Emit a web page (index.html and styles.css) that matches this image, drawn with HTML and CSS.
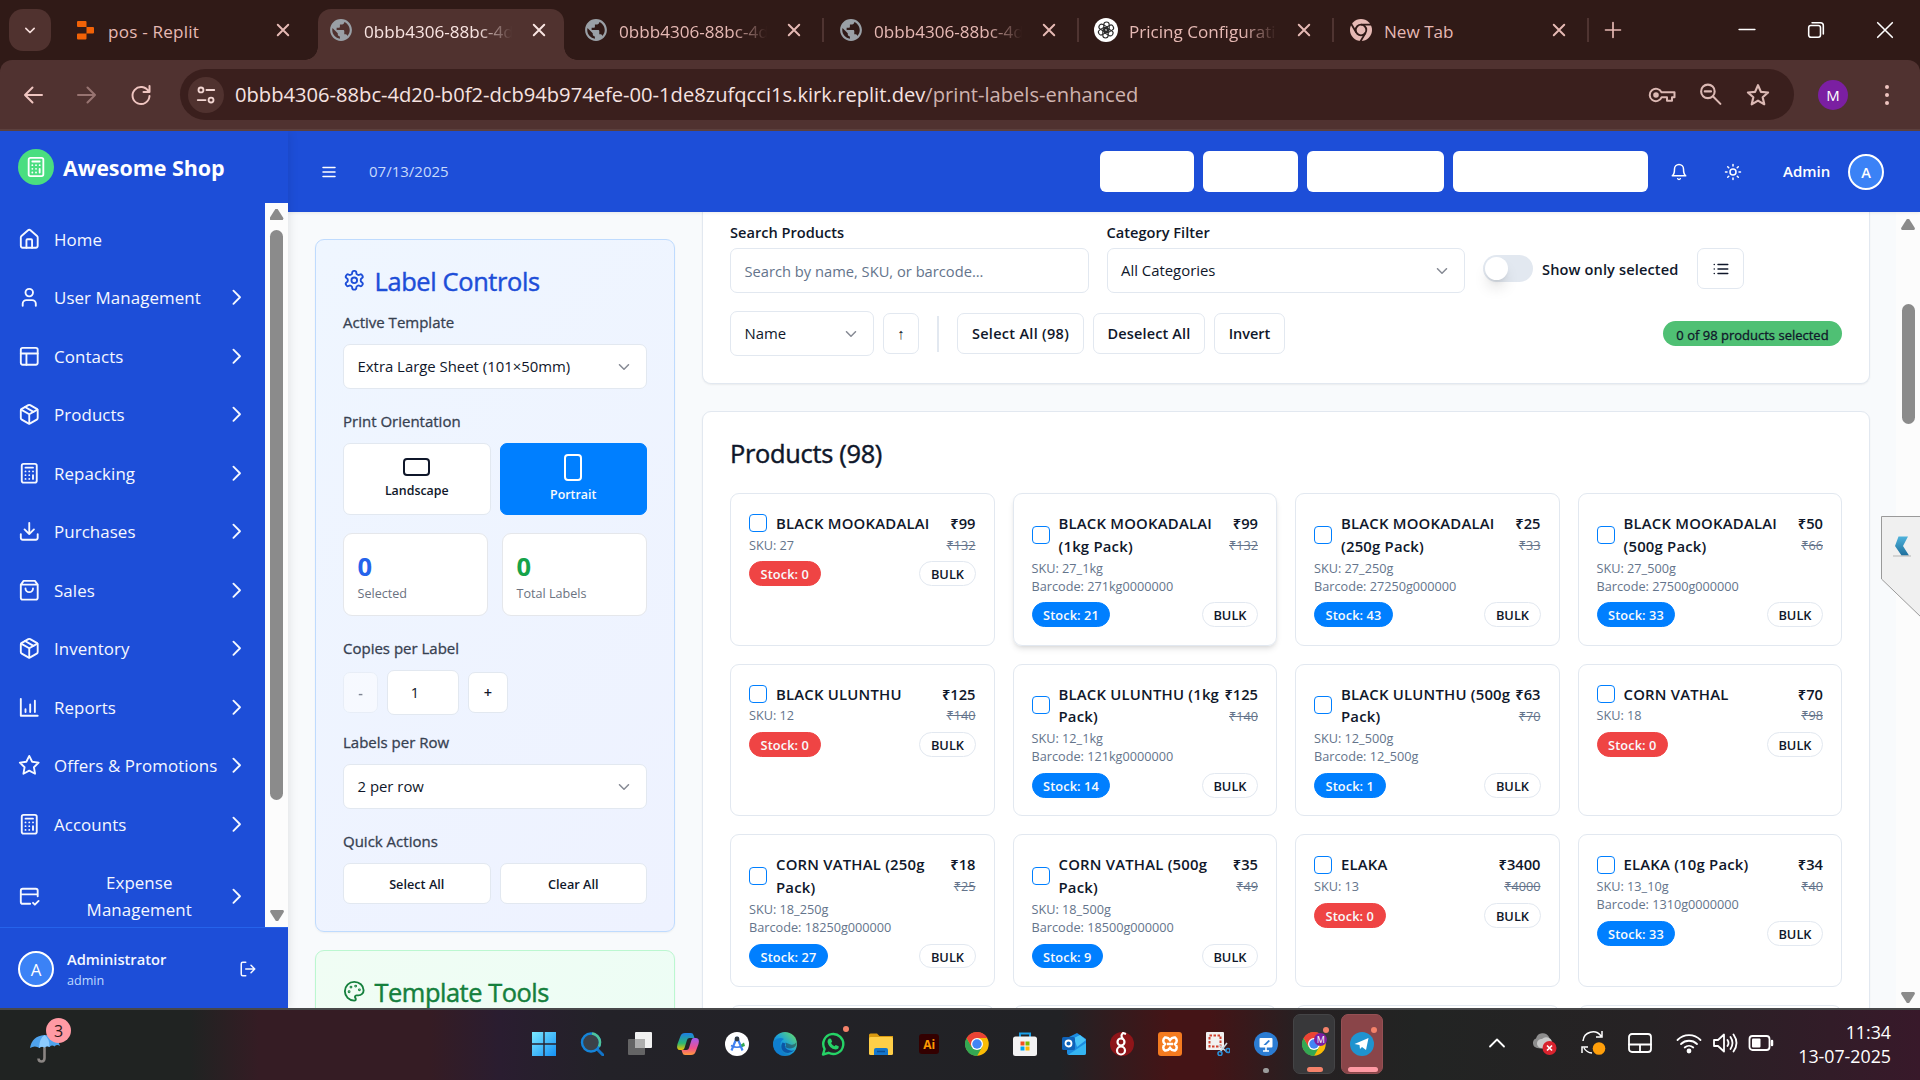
FILE: index.html
```html
<!DOCTYPE html>
<html lang="en">
<head>
<meta charset="utf-8">
<title>Print Labels</title>
<link rel="stylesheet" href="styles.css">
</head>
<body>
<svg class="defs" width="0" height="0">
  <defs>
    <linearGradient id="g-win" x1="0" y1="0" x2="1" y2="1"><stop offset="0" stop-color="#7be9ff"/><stop offset="1" stop-color="#1590f5"/></linearGradient>
    <linearGradient id="g-tv" x1="0" y1="0" x2="0" y2="1"><stop offset="0" stop-color="#4fb3dc"/><stop offset="1" stop-color="#1f6f9c"/></linearGradient>
    <linearGradient id="g-edge" x1="0" y1="1" x2="1" y2="0"><stop offset="0" stop-color="#0c59a4"/><stop offset=".5" stop-color="#1ba0dc"/><stop offset="1" stop-color="#6fe35a"/></linearGradient>
    <linearGradient id="g-cpa" x1="0" y1="0" x2="0" y2="1"><stop offset="0" stop-color="#1c7fe8"/><stop offset=".6" stop-color="#2bb673"/><stop offset="1" stop-color="#f2c300"/></linearGradient>
    <linearGradient id="g-cpb" x1="0" y1="0" x2="0" y2="1"><stop offset="0" stop-color="#a05cf0"/><stop offset=".6" stop-color="#f0508c"/><stop offset="1" stop-color="#ff9a3c"/></linearGradient>
    <symbol id="close" viewBox="0 0 24 24"><path d="M5 5l14 14M19 5L5 19"/></symbol>
    <symbol id="globe" viewBox="1 1 22 22"><path fill="#9aa0a6" d="M12 2C6.480 2 2 6.480 2 12s4.480 10 10 10 10-4.480 10-10S17.520 2 12 2zm-1 17.930c-3.950-.49-7-3.850-7-7.930 0-.62.08-1.210.21-1.790L9 15v1c0 1.100.9 2 2 2v1.930zm6.900-2.540c-.26-.81-1-1.390-1.900-1.390h-1v-3c0-.55-.45-1-1-1H8v-2h2c.55 0 1-.45 1-1V7h2c1.100 0 2-.9 2-2v-.41c2.930 1.190 5 4.060 5 7.410 0 2.080-.8 3.970-2.100 5.390z"/></symbol>
    <symbol id="chev" viewBox="0 0 24 24"><path d="M9 5l7 7-7 7"/></symbol>
    <symbol id="down" viewBox="0 0 24 24"><path d="M6 9l6 6 6-6"/></symbol>
    <symbol id="home" viewBox="0 0 24 24"><path d="M15 21v-8a1 1 0 0 0-1-1h-4a1 1 0 0 0-1 1v8"/><path d="M3 10a2 2 0 0 1 .709-1.528l7-5.999a2 2 0 0 1 2.582 0l7 5.999A2 2 0 0 1 21 10v9a2 2 0 0 1-2 2H5a2 2 0 0 1-2-2z"/></symbol>
    <symbol id="user" viewBox="0 0 24 24"><path d="M19 21v-2a4 4 0 0 0-4-4H9a4 4 0 0 0-4 4v2"/><circle cx="12" cy="7" r="4"/></symbol>
    <symbol id="layout" viewBox="0 0 24 24"><rect x="3" y="3" width="18" height="18" rx="2"/><path d="M3 9h18M9 21V9"/></symbol>
    <symbol id="package" viewBox="0 0 24 24"><path d="M7.500 4.270l9 5.150"/><path d="M21 8a2 2 0 0 0-1-1.730l-7-4a2 2 0 0 0-2 0l-7 4A2 2 0 0 0 3 8v8a2 2 0 0 0 1 1.730l7 4a2 2 0 0 0 2 0l7-4A2 2 0 0 0 21 16z"/><path d="M3.300 7l8.700 5 8.700-5M12 22V12"/></symbol>
    <symbol id="calc" viewBox="0 0 24 24"><rect x="4" y="2" width="16" height="20" rx="2"/><path d="M8 6h8M16 14v4M16 10h.01M12 10h.01M8 10h.01M12 14h.01M8 14h.01M12 18h.01M8 18h.01"/></symbol>
    <symbol id="download" viewBox="0 0 24 24"><path d="M21 15v4a2 2 0 0 1-2 2H5a2 2 0 0 1-2-2v-4M7 10l5 5 5-5M12 15V3"/></symbol>
    <symbol id="bag" viewBox="0 0 24 24"><path d="M6 2L3 6v14a2 2 0 0 0 2 2h14a2 2 0 0 0 2-2V6l-3-4zM3 6h18M16 10a4 4 0 0 1-8 0"/></symbol>
    <symbol id="chart" viewBox="0 0 24 24"><path d="M3 3v18h18M8 17v-3M13 17V9M18 17V5"/></symbol>
    <symbol id="star" viewBox="0 0 24 24"><path d="M12 2l3.090 6.260L22 9.270l-5 4.870 1.180 6.880L12 17.770l-6.180 3.250L7 14.140 2 9.270l6.910-1.010z"/></symbol>
    <symbol id="cardcheck" viewBox="0 0 24 24"><path d="M13 20H5a2 2 0 0 1-2-2V6a2 2 0 0 1 2-2h14a2 2 0 0 1 2 2v6M3 10h18M16 19l2 2 4-4"/></symbol>
    <symbol id="gear" viewBox="0 0 24 24"><path d="M12.220 2h-.44a2 2 0 0 0-2 2v.18a2 2 0 0 1-1 1.730l-.43.25a2 2 0 0 1-2 0l-.15-.08a2 2 0 0 0-2.730.73l-.22.38a2 2 0 0 0 .73 2.730l.15.1a2 2 0 0 1 1 1.720v.51a2 2 0 0 1-1 1.740l-.15.09a2 2 0 0 0-.73 2.730l.22.38a2 2 0 0 0 2.730.73l.15-.08a2 2 0 0 1 2 0l.43.25a2 2 0 0 1 1 1.730V20a2 2 0 0 0 2 2h.44a2 2 0 0 0 2-2v-.18a2 2 0 0 1 1-1.730l.43-.25a2 2 0 0 1 2 0l.15.08a2 2 0 0 0 2.730-.73l.22-.39a2 2 0 0 0-.73-2.730l-.15-.08a2 2 0 0 1-1-1.740v-.5a2 2 0 0 1 1-1.740l.15-.09a2 2 0 0 0 .73-2.730l-.22-.38a2 2 0 0 0-2.730-.73l-.15.08a2 2 0 0 1-2 0l-.43-.25a2 2 0 0 1-1-1.730V4a2 2 0 0 0-2-2z"/><circle cx="12" cy="12" r="3"/></symbol>
    <symbol id="palette" viewBox="0 0 24 24"><circle cx="13.500" cy="6.500" r=".5"/><circle cx="17.500" cy="10.500" r=".5"/><circle cx="8.500" cy="7.500" r=".5"/><circle cx="6.500" cy="12.500" r=".5"/><path d="M12 2C6.500 2 2 6.500 2 12s4.500 10 10 10c.926 0 1.648-.746 1.648-1.688 0-.437-.18-.835-.437-1.125-.29-.289-.438-.652-.438-1.125a1.640 1.640 0 0 1 1.668-1.668h1.996c3.051 0 5.555-2.503 5.555-5.554C21.965 6.012 17.461 2 12 2z"/></symbol>
    <symbol id="chrome" viewBox="0 0 48 48"><circle cx="24" cy="24" r="23.500" fill="#fbbc05"/><path d="M13.600 30L3.200 12A24 24 0 0 0 24 48l10.400-18z" fill="#34a853"/><path d="M24 12h20.800A24 24 0 0 0 3.200 12l10.400 18z" fill="#ea4335"/><circle cx="24" cy="24" r="12" fill="#fff"/><circle cx="24" cy="24" r="9.500" fill="#4285f4"/></symbol>
  </defs>
</svg>

<div class="screen">
  <header class="tabstrip">
    <div class="tabsearch"><svg class="ln" viewBox="0 0 24 24" width="20" height="20" stroke-width="2.500"><path d="M7 10l5 5 5-5"/></svg></div>
    <div class="tab first">
      <svg class="fav" viewBox="0 0 24 24"><path fill="#f26207" d="M4 3h7.500q1 0 1 1v5H4q-1 0-1-1V4q0-1 1-1zM12.500 9H19q1 0 1 1v4.500q0 1-1 1h-6.500zM4 15.500h8.500v5q0 1-1 1H4q-1 0-1-1v-4q0-1 1-1z"/></svg>
      <span class="tt nofade">pos - Replit</span><svg class="x ln"><use href="#close"/></svg>
    </div>
    <div class="tab on"><svg class="fav"><use href="#globe"/></svg><span class="tt">0bbb4306-88bc-4d</span><svg class="x ln"><use href="#close"/></svg></div>
    <div class="tab"><svg class="fav"><use href="#globe"/></svg><span class="tt">0bbb4306-88bc-4d</span><svg class="x ln"><use href="#close"/></svg></div>
    <div class="tab sep"><svg class="fav"><use href="#globe"/></svg><span class="tt">0bbb4306-88bc-4d</span><svg class="x ln"><use href="#close"/></svg></div>
    <div class="tab sep">
      <svg class="fav" viewBox="0 0 24 24"><circle cx="12" cy="12" r="12" fill="#fff"/><g fill="none" stroke="#2b2b2b" stroke-width="1.100"><rect id="pt" x="9.800" y="4" width="5.400" height="9.500" rx="2.700"/><use href="#pt" transform="rotate(60 12 12)"/><use href="#pt" transform="rotate(120 12 12)"/><use href="#pt" transform="rotate(180 12 12)"/><use href="#pt" transform="rotate(240 12 12)"/><use href="#pt" transform="rotate(300 12 12)"/></g></svg>
      <span class="tt">Pricing Configurati</span><svg class="x ln"><use href="#close"/></svg>
    </div>
    <div class="tab sep">
      <svg class="fav" viewBox="0 0 24 24"><circle cx="12" cy="12" r="11" fill="#e6b9b4"/><circle cx="12" cy="12" r="5.300" fill="none" stroke="#301a17" stroke-width="1.800"/><path d="M12 6.700h11M7.400 14.700L2 5.500M16.600 14.700l-5.300 9" stroke="#301a17" stroke-width="1.800"/></svg>
      <span class="tt nofade">New Tab</span><svg class="x ln"><use href="#close"/></svg>
    </div>
    <div class="newtab"><svg class="ln" viewBox="0 0 24 24" width="20" height="20" stroke-width="2.200"><path d="M12 3v18M3 12h18"/></svg></div>
    <div class="wins">
      <svg class="ln" viewBox="0 0 16 16" width="18" height="18"><path d="M1 7.500h14"/></svg>
      <svg class="ln" viewBox="0 0 16 16" width="18" height="18"><rect x="1.500" y="4" width="10.500" height="10.500" rx="2"/><path d="M4.500 1.500h7.500q2.500 0 2.500 2.500v7.500"/></svg>
      <svg class="ln" viewBox="0 0 16 16" width="18" height="18"><path d="M1.500 1.500l13 13M14.500 1.500l-13 13"/></svg>
    </div>
  </header>

  <div class="toolbar">
    <svg class="ln nb" viewBox="0 0 24 24"><path d="M21 12H4M11.500 4.500L4 12l7.500 7.500"/></svg>
    <svg class="ln nb dim" viewBox="0 0 24 24"><path d="M3 12h17M12.500 4.500L20 12l-7.500 7.500"/></svg>
    <svg class="ln nb" viewBox="0 0 24 24"><path d="M19.500 8.500A8.500 8.500 0 1 0 20.500 13M20.500 3v6h-6"/></svg>
    <div class="omni">
      <div class="site"><svg class="ln" viewBox="0 0 24 24" width="22" height="22" stroke-width="2.200"><circle cx="6.500" cy="6.500" r="2.700"/><path d="M12.500 6.500H21M3 17.500h8.500"/><circle cx="17.500" cy="17.500" r="2.700"/></svg></div>
      <div class="url">0bbb4306-88bc-4d20-b0f2-dcb94b974efe-00-1de8zufqcci1s.kirk.replit.dev<span>/print-labels-enhanced</span></div>
      <svg class="ln oi" viewBox="0 0 28 24" width="28" height="24"><path d="M13.500 9.200h13v5h-2.500v3.600h-5v-3.600h-5.300a6.200 6.200 0 1 1-.2-5z"/><circle cx="8" cy="12" r="1.800" fill="currentColor"/></svg>
      <svg class="ln oi" viewBox="0 0 24 24" width="25" height="25"><circle cx="9.500" cy="9" r="6.500"/><path d="M14.500 14l7 7M6.500 9h6"/></svg>
      <svg class="ln oi" viewBox="0 0 24 24" width="26" height="26"><path d="M12 3l2.700 6.100 6.600.6-5 4.400 1.500 6.500L12 17.200l-5.800 3.400 1.500-6.500-5-4.400 6.600-.6z"/></svg>
    </div>
    <div class="pm">M</div>
    <svg class="kebab" viewBox="0 0 24 24" width="24" height="24"><circle cx="12" cy="4" r="2"/><circle cx="12" cy="12" r="2"/><circle cx="12" cy="20" r="2"/></svg>
  </div>

  <div class="app">
    <aside class="side">
      <div class="brand"><div class="logo"><svg class="ln" viewBox="0 0 24 24" width="22" height="22"><use href="#calc"/></svg></div><span>Awesome Shop</span></div>
      <div class="navwrap">
        <nav class="nav">
          <a><svg class="ln ic"><use href="#home"/></svg><span>Home</span></a>
          <a><svg class="ln ic"><use href="#user"/></svg><span>User Management</span><svg class="ln ic"><use href="#chev"/></svg></a>
          <a><svg class="ln ic"><use href="#layout"/></svg><span>Contacts</span><svg class="ln ic"><use href="#chev"/></svg></a>
          <a><svg class="ln ic"><use href="#package"/></svg><span>Products</span><svg class="ln ic"><use href="#chev"/></svg></a>
          <a><svg class="ln ic"><use href="#calc"/></svg><span>Repacking</span><svg class="ln ic"><use href="#chev"/></svg></a>
          <a><svg class="ln ic"><use href="#download"/></svg><span>Purchases</span><svg class="ln ic"><use href="#chev"/></svg></a>
          <a><svg class="ln ic"><use href="#bag"/></svg><span>Sales</span><svg class="ln ic"><use href="#chev"/></svg></a>
          <a><svg class="ln ic"><use href="#package"/></svg><span>Inventory</span><svg class="ln ic"><use href="#chev"/></svg></a>
          <a><svg class="ln ic"><use href="#chart"/></svg><span>Reports</span><svg class="ln ic"><use href="#chev"/></svg></a>
          <a><svg class="ln ic"><use href="#star"/></svg><span>Offers &amp; Promotions</span><svg class="ln ic"><use href="#chev"/></svg></a>
          <a><svg class="ln ic"><use href="#calc"/></svg><span>Accounts</span><svg class="ln ic"><use href="#chev"/></svg></a>
          <a class="two"><svg class="ln ic"><use href="#cardcheck"/></svg><span>Expense<br>Management</span><svg class="ln ic"><use href="#chev"/></svg></a>
        </nav>
        <div class="sbar nb-bar"><i class="up"></i><b></b><i class="dn"></i></div>
      </div>
      <div class="me">
        <div class="av">A</div>
        <div class="who"><strong>Administrator</strong><small>admin</small></div>
        <svg class="ln" viewBox="0 0 24 24" width="18" height="18"><path d="M9 21H5a2 2 0 0 1-2-2V5a2 2 0 0 1 2-2h4M16 17l5-5-5-5M21 12H9"/></svg>
      </div>
    </aside>

    <div class="right">
      <div class="top">
        <svg class="ln" viewBox="0 0 24 24" width="18" height="18"><path d="M4 6h16M4 12h16M4 18h16"/></svg>
        <span class="date">07/13/2025</span>
        <div class="blank w1"></div><div class="blank w2"></div><div class="blank w3"></div><div class="blank w4"></div>
        <svg class="ln bell" viewBox="0 0 24 24" width="18" height="18"><path d="M6 8a6 6 0 0 1 12 0c0 7 3 9 3 9H3s3-2 3-9M10.300 21a1.940 1.940 0 0 0 3.400 0"/></svg>
        <svg class="ln sun" viewBox="0 0 24 24" width="18" height="18"><circle cx="12" cy="12" r="4"/><path d="M12 2v2M12 20v2M4.930 4.930l1.410 1.410M17.660 17.660l1.410 1.410M2 12h2M20 12h2M6.340 17.660l-1.410 1.410M19.070 4.930l-1.410 1.410"/></svg>
        <span class="adm">Admin</span>
        <div class="av b">A</div>
      </div>

      <div class="main">
        <div class="left">
          <section class="panel blue">
            <h2><svg class="ln ic"><use href="#gear"/></svg><span>Label Controls</span></h2>
            <label>Active Template</label>
            <div class="select"><span>Extra Large Sheet (101×50mm)</span><svg class="ln"><use href="#down"/></svg></div>
            <label>Print Orientation</label>
            <div class="pair orient">
              <div class="obtn"><i class="land"></i><span>Landscape</span></div>
              <div class="obtn sel"><i class="port"></i><span>Portrait</span></div>
            </div>
            <div class="pair stats">
              <div class="stat"><b>0</b><span>Selected</span></div>
              <div class="stat g"><b>0</b><span>Total Labels</span></div>
            </div>
            <label class="cp">Copies per Label</label>
            <div class="copies"><div class="btn mi">-</div><div class="btn num">1</div><div class="btn pl">+</div></div>
            <label class="lr">Labels per Row</label>
            <div class="select"><span>2 per row</span><svg class="ln"><use href="#down"/></svg></div>
            <label>Quick Actions</label>
            <div class="pair"><div class="btn qa">Select All</div><div class="btn qa">Clear All</div></div>
          </section>
          <section class="panel green"><h2><svg class="ln ic"><use href="#palette"/></svg><span>Template Tools</span></h2></section>
        </div>

        <div class="content">
          <section class="card filters">
            <div class="frow">
              <div class="field"><label>Search Products</label><div class="select ph"><span>Search by name, SKU, or barcode...</span></div></div>
              <div class="field"><label>Category Filter</label><div class="select"><span>All Categories</span><svg class="ln"><use href="#down"/></svg></div></div>
              <div class="tog"><div class="switch"><i></i></div><span>Show only selected</span></div>
              <div class="btn list"><svg class="ln" viewBox="0 0 24 24" width="18" height="18"><path d="M8 6h13M8 12h13M8 18h13M3 6h.01M3 12h.01M3 18h.01"/></svg></div>
            </div>
            <div class="srow">
              <div class="select name"><span>Name</span><svg class="ln"><use href="#down"/></svg></div>
              <div class="btn arr">↑</div>
              <div class="vsep"></div>
              <div class="btn sa">Select All (98)</div>
              <div class="btn da">Deselect All</div>
              <div class="btn inv">Invert</div>
              <div class="badge">0 of 98 products selected</div>
            </div>
          </section>
          <section class="card prods">
            <h2>Products (98)</h2>
            <div class="grid">
              <article class="p"><div class="h"><div class="n"><i></i><span>BLACK MOOKADALAI</span></div><b>₹99</b></div><div class="s"><span>SKU: 27</span><del>₹132</del></div><div class="f"><em class="red">Stock: 0</em><u>BULK</u></div></article>
              <article class="p hov"><div class="h"><div class="n"><i></i><span>BLACK MOOKADALAI<br>(1kg Pack)</span></div><b>₹99</b></div><del class="m">₹132</del><div class="s"><span>SKU: 27_1kg</span></div><div class="s"><span>Barcode: 271kg0000000</span></div><div class="f"><em>Stock: 21</em><u>BULK</u></div></article>
              <article class="p"><div class="h"><div class="n"><i></i><span>BLACK MOOKADALAI<br>(250g Pack)</span></div><b>₹25</b></div><del class="m">₹33</del><div class="s"><span>SKU: 27_250g</span></div><div class="s"><span>Barcode: 27250g000000</span></div><div class="f"><em>Stock: 43</em><u>BULK</u></div></article>
              <article class="p"><div class="h"><div class="n"><i></i><span>BLACK MOOKADALAI<br>(500g Pack)</span></div><b>₹50</b></div><del class="m">₹66</del><div class="s"><span>SKU: 27_500g</span></div><div class="s"><span>Barcode: 27500g000000</span></div><div class="f"><em>Stock: 33</em><u>BULK</u></div></article>

              <article class="p"><div class="h"><div class="n"><i></i><span>BLACK ULUNTHU</span></div><b>₹125</b></div><div class="s"><span>SKU: 12</span><del>₹140</del></div><div class="f"><em class="red">Stock: 0</em><u>BULK</u></div></article>
              <article class="p"><div class="h"><div class="n"><i></i><span>BLACK ULUNTHU (1kg<br>Pack)</span></div><b>₹125</b></div><del class="m">₹140</del><div class="s"><span>SKU: 12_1kg</span></div><div class="s"><span>Barcode: 121kg0000000</span></div><div class="f"><em>Stock: 14</em><u>BULK</u></div></article>
              <article class="p"><div class="h"><div class="n"><i></i><span>BLACK ULUNTHU (500g<br>Pack)</span></div><b>₹63</b></div><del class="m">₹70</del><div class="s"><span>SKU: 12_500g</span></div><div class="s"><span>Barcode: 12_500g</span></div><div class="f"><em>Stock: 1</em><u>BULK</u></div></article>
              <article class="p"><div class="h"><div class="n"><i></i><span>CORN VATHAL</span></div><b>₹70</b></div><div class="s"><span>SKU: 18</span><del>₹98</del></div><div class="f"><em class="red">Stock: 0</em><u>BULK</u></div></article>

              <article class="p"><div class="h"><div class="n"><i></i><span>CORN VATHAL (250g<br>Pack)</span></div><b>₹18</b></div><del class="m">₹25</del><div class="s"><span>SKU: 18_250g</span></div><div class="s"><span>Barcode: 18250g000000</span></div><div class="f"><em>Stock: 27</em><u>BULK</u></div></article>
              <article class="p"><div class="h"><div class="n"><i></i><span>CORN VATHAL (500g<br>Pack)</span></div><b>₹35</b></div><del class="m">₹49</del><div class="s"><span>SKU: 18_500g</span></div><div class="s"><span>Barcode: 18500g000000</span></div><div class="f"><em>Stock: 9</em><u>BULK</u></div></article>
              <article class="p"><div class="h"><div class="n"><i></i><span>ELAKA</span></div><b>₹3400</b></div><div class="s"><span>SKU: 13</span><del>₹4000</del></div><div class="f"><em class="red">Stock: 0</em><u>BULK</u></div></article>
              <article class="p"><div class="h"><div class="n"><i></i><span>ELAKA (10g Pack)</span></div><b>₹34</b></div><div class="s"><span>SKU: 13_10g</span><del>₹40</del></div><div class="s"><span>Barcode: 1310g0000000</span></div><div class="f"><em>Stock: 33</em><u>BULK</u></div></article>
              <article class="p"></article><article class="p"></article><article class="p"></article><article class="p"></article>
            </div>
          </section>
        </div>

        <div class="sbar main-bar"><i class="up"></i><b></b><i class="dn"></i></div>
      </div>
    </div>
  </div>

  <svg class="handle" width="40" height="102" viewBox="0 0 40 102"><path d="M.5.500H41V102L.5 63z" fill="#f0f0f0" stroke="#9a9a9a"/><path d="M17.500 20.500H27l-5 9.500 6 9.500h-7.500L14 30z" fill="url(#g-tv)"/><path d="M12 40h18" stroke="#b5b5b5"/></svg>

  <footer class="task">
    <div class="weather">
      <svg width="32" height="32" viewBox="0 0 32 32"><path d="M14.500 12v15q0 3.500-3 3.500t-3-3" fill="none" stroke="#8a8583" stroke-width="2.600"/><path d="M0 17Q2 5 14.500 4 27 4 30 15q-3-2-5.500.500-2.500-2-5 .5-2.500-1.500-5 .5-2.500-1.500-5 .5Q5 14 0 17z" fill="#4fa3ee"/><path d="M9 17Q9.500 7 14.500 4q5 3 5 12-2.500-1.500-5 .500-3-1.500-5.500.5z" fill="#8ccbff"/></svg>
      <span>3</span>
    </div>
    <div class="apps">
      <div class="a"><svg viewBox="0 0 24 24"><path d="M0 0h11.300v11.300H0zM12.700 0H24v11.300H12.700zM0 12.700h11.300V24H0zM12.700 12.700H24V24H12.700z" fill="url(#g-win)"/></svg></div>
      <div class="a"><svg viewBox="0 0 24 24"><path d="M17 17l6 6" stroke="#1173c8" stroke-width="3" stroke-linecap="round"/><circle cx="11" cy="10.500" r="9" fill="#3b4148" stroke="#1584d8" stroke-width="2.400"/><path d="M12 1.500a9 9 0 0 1 7 13" fill="none" stroke="#4fc49a" stroke-width="2.400"/></svg></div>
      <div class="a"><svg viewBox="0 0 24 24"><rect x="7" y="0" width="17" height="16" rx="1" fill="#f1f1f1"/><rect x="0" y="7" width="17" height="16" rx="1" fill="#6b6b6b" opacity=".9"/><rect x="7" y="7" width="10" height="9" fill="#adadad"/></svg></div>
      <div class="a"><svg viewBox="0 0 24 24"><path d="M9 1h6q2 0 2.500 2l1 3h-5q-2 0-2.500 2L8.500 16q-.5 2-2.500 2H4Q0 18 1.500 12L4.500 4Q5.500 1 9 1z" fill="url(#g-cpa)"/><path d="M15 23H9q-2 0-2.500-2l-1-3h5q2 0 2.500-2L15.500 8q.5-2 2.500-2h2q4 0 2.500 6L19.500 20Q18.500 23 15 23z" fill="url(#g-cpb)"/></svg></div>
      <div class="a"><svg viewBox="0 0 24 24"><circle cx="12" cy="12" r="12" fill="#fff"/><path d="M12 5L6.500 18.500M12 5l5.500 13.500" stroke="#4285f4" stroke-width="2.200"/><path d="M6 13.500q6 3.500 12 0" stroke="#3f7de8" stroke-width="1.500" fill="none"/><circle cx="12" cy="7" r="2.400" fill="#2f3a44"/><path d="M16 12.500l3-2 1 3.500-3 1z" fill="#34a853"/></svg></div>
      <div class="a"><svg viewBox="0 0 24 24"><circle cx="12" cy="12" r="12" fill="url(#g-edge)"/><path d="M1 9q5-5 10-2-4 2-4 7 0 6 6 9.800Q2 24 .300 14z" fill="#0f7fd0"/><path d="M9.500 10.500Q7 15 10 19q5 4.500 12-1-4 1.500-7.500-.5-4-2.500-2-6z" fill="#0c56a5"/><path d="M12.500 10.500q1.200 2.500-.2 4.500 3 2.500 8.500.500 3-2 2.700-5.500-2 3.500-6 2.500-2.500-1-5-2z" fill="#23262b" opacity=".45"/></svg></div>
      <div class="a"><svg viewBox="0 0 24 24"><path d="M2 22.500l1.600-5.500a10 10 0 1 1 3.900 3.800z" fill="none" stroke="#25d366" stroke-width="2.400" stroke-linejoin="round"/><path d="M8 6.500l2 .2 1.200 3L10 11q1.300 2.300 3.500 3.300l1.200-1.400 3 1.300q.3 3.300-3.200 3.300Q8 16.500 6.500 10 6.500 7.500 8 6.500z" fill="#25d366"/></svg><i class="dot"></i></div>
      <div class="a"><svg viewBox="0 0 24 24"><path d="M0 3q0-1.500 1.500-1.500H8L10.500 4H24v6H0z" fill="#d99a10"/><rect x="0" y="5" width="24" height="18" rx="1.500" fill="#ffcf48"/><path d="M5 23v-5q0-2 2-2h10q2 0 2 2v5z" fill="#1476cc"/><path d="M8 19.500h8" stroke="#0b4f94" stroke-width="1.500"/></svg></div>
      <div class="a"><span class="ai">Ai</span></div>
      <div class="a"><svg><use href="#chrome"/></svg></div>
      <div class="a"><svg viewBox="0 0 24 24"><path d="M7 6V1.500h10V6" fill="none" stroke="#1a9fe8" stroke-width="2"/><rect x="0" y="4.500" width="24" height="19.500" rx="2.500" fill="#f3f3f3"/><path d="M7.500 9.500h4v4h-4z" fill="#f25022"/><path d="M12.500 9.500h4v4h-4z" fill="#7fba00"/><path d="M7.500 14.500h4v4h-4z" fill="#00a4ef"/><path d="M12.500 14.500h4v4h-4z" fill="#ffb900"/></svg></div>
      <div class="a"><svg viewBox="0 0 24 24"><path d="M5 6l10-5 9 6v14q0 2-2 2H7q-2 0-2-2z" fill="#1b8be0"/><path d="M12 6l6-3 6 5-9 7z" fill="#49c3f7"/><path d="M6 23l18-12v10q0 2-2 2z" fill="#35b5f2"/><rect x="0" y="5" width="13" height="13" rx="1.500" fill="#0f62b8"/><circle cx="6.500" cy="11.500" r="3" fill="none" stroke="#fff" stroke-width="1.800"/></svg></div>
      <div class="a"><svg viewBox="0 0 24 24"><circle cx="12" cy="12" r="12" fill="#8e1519"/><g fill="none" stroke="#fff" stroke-width="2.200"><circle cx="11" cy="10" r="3.500"/><circle cx="11" cy="18.500" r="4"/><path d="M13 7q-3-3.500 0-6l3 1"/></g></svg></div>
      <div class="a"><svg viewBox="0 0 24 24"><rect width="24" height="24" rx="3" fill="#f47b20"/><path d="M7 5.500q-3.500 3 0 6.500-3.500 3.500 0 6.500 3 .5 5-2.500 2 3 5 2.500 3.500-3 0-6.500 3.500-3.500 0-6.500-3-.5-5 2.500-2-3-5-2.500zM9 12h6" fill="none" stroke="#fff" stroke-width="2.500"/></svg></div>
      <div class="a"><svg viewBox="0 0 24 24"><rect x="0" y="0" width="18" height="18" rx="1" fill="#f1f1f1"/><path d="M3.500 3.500h11v11h-11z" fill="none" stroke="#d13f2d" stroke-width="2" stroke-dasharray="2.500 1.500"/><path d="M13 13l8 7M21 11l-7 9" stroke="#c9d6df" stroke-width="1.600"/><circle cx="22" cy="18.500" r="2" fill="none" stroke="#2a8fd8" stroke-width="1.600"/><circle cx="14" cy="21.500" r="2" fill="none" stroke="#2a8fd8" stroke-width="1.600"/></svg></div>
      <div class="a"><svg viewBox="0 0 24 24"><circle cx="12" cy="12" r="12" fill="#2b7cd3"/><rect x="5.500" y="6" width="13" height="9.500" rx="1" fill="#fff"/><path d="M9 19h6M12 15v4" stroke="#fff" stroke-width="1.600"/><path d="M14.500 8l-5 5h2.500l4-4z" fill="#2b7cd3"/></svg><i class="run"></i></div>
      <div class="a act"><svg><use href="#chrome"/></svg><em>M</em><i class="dot"></i><i class="line"></i></div>
      <div class="a act pink"><svg viewBox="0 0 24 24"><circle cx="12" cy="12" r="12" fill="#1f93cf"/><path d="M4.500 12L18.500 6l-2.500 12-4-3-2 2-.5-4z" fill="#fff"/></svg><i class="dot"></i><i class="line w"></i></div>
    </div>
    <div class="tray">
      <svg class="ln" width="18" height="18" viewBox="0 0 18 18"><path d="M2 12.500l7-7 7 7"/></svg>
      <svg class="cl" width="26" height="26" viewBox="0 0 26 26"><path d="M6 18a5 5 0 0 1-1-9.500A7 7 0 0 1 18 7l3 8-8 4z" fill="#8d8d8d"/><path d="M10 18a4.500 4.500 0 0 1 1-9 6 6 0 0 1 10 3l-2 6z" fill="#c9c9c9"/><circle cx="18.500" cy="18" r="7" fill="#d9232e"/><path d="M16 15.500l5 5M21 15.500l-5 5" stroke="#fff" stroke-width="1.700"/></svg>
      <svg class="sy" width="26" height="26" viewBox="0 0 26 26"><path d="M3 11A10 10 0 0 1 21 6M22 1v6h-6M12 23A10 10 0 0 1 4 18M2 23v-6h6" fill="none" stroke="#fff" stroke-width="1.500"/><circle cx="19" cy="18.500" r="6.300" fill="#ff9f0a"/></svg>
      <svg class="ln tp" width="24" height="20" viewBox="0 0 24 20"><rect x="1" y="1" width="22" height="18" rx="3"/><path d="M1 11.500h22M12 11.500V19"/></svg>
      <svg class="ln wf" width="26" height="22" viewBox="0 0 26 22"><path d="M1.500 8a16 16 0 0 1 23 0M5 12a11.500 11.500 0 0 1 16 0M8.700 15.500a6.500 6.500 0 0 1 8.600 0"/><circle cx="13" cy="19" r="1.500" fill="currentColor"/></svg>
      <svg class="ln vo" width="26" height="22" viewBox="0 0 26 22"><path d="M2 8h4l6-5.500v17L6 14H2zM15.500 8q2 3 0 6M18.500 5q4 6 0 12M21.500 2.500q6 8.500 0 17"/></svg>
      <svg class="ln ba" width="26" height="20" viewBox="0 0 26 20"><rect x="1.500" y="3" width="20" height="14" rx="3"/><rect x="4" y="5.500" width="8.500" height="9" rx="1" fill="currentColor" stroke="none"/><path d="M24 8v4" stroke-width="2.500"/></svg>
      <div class="clock"><span>11:34</span><span>13-07-2025</span></div>
    </div>
  </footer>
</div>
</body>
</html>
```
FILE: styles.css
```css
* { box-sizing: border-box; }
body { margin: 0; font-family: "Open Sans", "Noto Sans", sans-serif; color: #0f172a; font-size: 14.6px; }
.defs { display: block; position: absolute; }
.screen { width: 1920px; height: 1080px; overflow: hidden; display: flex; flex-direction: column; position: relative; background: #301a17; }
.ln { fill: none; stroke: currentColor; stroke-width: 2; stroke-linecap: round; stroke-linejoin: round; flex: none; }
.ic { width: 22.5px; height: 22.5px; }
h2 { margin: 0; font-weight: 400; -webkit-text-stroke: .45px currentColor; }

/* browser chrome */
.tabstrip { height: 60px; background: #301a17; display: flex; align-items: flex-start; padding-left: 9px; color: #e6b9b4; flex: none; }
.tabsearch { width: 42px; height: 42px; margin-top: 9px; border-radius: 14px; background: #50322f; display: grid; place-items: center; color: #f6dedb; }
.tab { width: 255px; height: 60px; display: flex; align-items: center; padding-left: 9px; position: relative; flex: none; }
.tab .fav { width: 24px; height: 24px; margin-right: 11px; flex: none; }
.tab .tt { width: 151px; overflow: hidden; white-space: nowrap; font-size: 17.1px; padding-top: 2px; -webkit-mask-image: linear-gradient(90deg, #000 75%, transparent 98%); mask-image: linear-gradient(90deg, #000 75%, transparent 98%); }
.tab .tt.nofade { -webkit-mask-image: none; mask-image: none; }
.tab .x { width: 18px; height: 18px; stroke-width: 2.6; margin-left: 15px; }
.tab.first { margin-left: 15px; padding-left: 8px; width: 258px; }
.tab.first .fav { margin-right: 10px; }
.tab.first .tt { letter-spacing: .2px; }
.tab.first .x { margin-left: 15px; }
.tab.on { color: #f9e5e2; margin-left: -8px; padding-left: 13px; width: 259px; }
.tab.on::before { content: ""; position: absolute; left: 2px; width: 246px; top: 9px; bottom: 0; background: #50322f; border-radius: 13px 13px 0 0; }
.tab.on::after { content: ""; position: absolute; left: -11px; right: -2px; bottom: 0; height: 13px; background: radial-gradient(circle at 0 0, transparent 12.5px, #50322f 13px) left / 13px 13px no-repeat, radial-gradient(circle at 100% 0, transparent 12.5px, #50322f 13px) right / 13px 13px no-repeat; transform: none; }
.tab.on::after { background: radial-gradient(circle at 0 0, transparent 12.5px, #50322f 13px) left / 13px 13px no-repeat, radial-gradient(circle at 100% 0, transparent 12.5px, #50322f 13px) right / 13px 13px no-repeat; left: -11px; right: -2px; }
.tab.on > * { z-index: 1; }
.tab.sep::before { content: ""; position: absolute; left: -8px; top: 18px; width: 2px; height: 24px; background: #4f3431; }
.newtab { height: 60px; width: 48px; display: flex; align-items: center; justify-content: center; position: relative; margin-left: -6px; }
.newtab::before { content: ""; position: absolute; left: -2px; top: 18px; width: 2px; height: 24px; background: #4f3431; }
.wins { margin-left: auto; height: 60px; display: flex; align-items: center; gap: 51px; padding-right: 26px; color: #fff; }
.wins svg { stroke-width: 1.4; }
.toolbar { height: 71px; background: #503230; border-radius: 12px 12px 0 0; border-bottom: 2px solid #5c403d; display: flex; align-items: center; padding: 0 21px; color: #efc5c0; flex: none; }
.nb { width: 24px; height: 24px; margin-right: 30px; }
.nb.dim { opacity: .45; }
.nb:nth-child(3) { margin-right: 27px; }
.omni { width: 1614px; height: 51px; border-radius: 26px; background: #3a1f1d; display: flex; align-items: center; padding: 0 23px 0 8px; color: #dcb9b4; }
.site { width: 36px; height: 36px; border-radius: 50%; background: #50322f; display: grid; place-items: center; margin-right: 11px; color: #f3d7d3; }
.url { flex: 1; font-size: 20.15px; color: #f6e3e1; white-space: nowrap; padding-bottom: 2px; }
.url span { color: #cfb3af; }
.oi { margin-left: 22px; }
.pm { width: 30px; height: 30px; border-radius: 50%; background: #7b1fa2; color: #fff; display: grid; place-items: center; margin-left: 24px; font-size: 15px; }
.kebab { fill: #efc5c0; margin-left: 27px; }

/* app shell */
.app { height: 877px; display: flex; background: #f8fafc; overflow: hidden; flex: none; }
.side { width: 288px; background: #1d4ed8; color: #f5f8ff; display: flex; flex-direction: column; box-shadow: 0 0 10px rgba(0,0,0,.12); z-index: 2; flex: none; }
.brand { height: 72px; display: flex; align-items: center; gap: 9px; padding-left: 18px; font-weight: 700; font-size: 21.5px; letter-spacing: -.05px; color: #fff; white-space: nowrap; }
.logo { width: 36px; height: 36px; border-radius: 50%; background: #4ade80; display: grid; place-items: center; }
.navwrap { height: 724px; display: flex; overflow: hidden; }
.nav { width: 265px; padding-top: 6.75px; }
.nav a { height: 58.5px; display: flex; align-items: center; padding: 0 18px; font-size: 16.9px; letter-spacing: .08px; }
.nav a span { margin-left: 13.5px; flex: 1; white-space: nowrap; }
.nav a.two { height: 85px; line-height: 27px; text-align: center; }
.sbar { background: #fcfcfc; display: flex; flex-direction: column; align-items: center; flex: none; }
.sbar i { width: 14px; height: 11px; background: #8b8b8b; clip-path: polygon(42% 0, 58% 0, 100% 85%, 95% 100%, 5% 100%, 0 85%); }
.sbar .dn { transform: rotate(180deg); margin-top: auto; }
.sbar b { width: 13px; border-radius: 7px; background: #8b8b8b; }
.nb-bar { width: 23px; padding: 6px 0; }
.nb-bar b { height: 570px; margin-top: 10px; }
.me { flex: 1; border-top: 1px solid #2563eb; display: flex; align-items: center; padding: 2px 31px 0 18px; }
.av { width: 36px; height: 36px; border-radius: 50%; background: #3b82f6; border: 2px solid #fff; display: grid; place-items: center; font-size: 16.8px; color: #fff; flex: none; }
.av.b { font-weight: 600; font-size: 14.6px; }
.who { flex: 1; margin-left: 13px; display: flex; flex-direction: column; line-height: 22px; padding-top: 1px; }
.who strong { font-weight: 600; font-size: 14.7px; }
.who small { font-size: 12.6px; color: #bfdbfe; }
.right { flex: 1; display: flex; flex-direction: column; min-width: 0; }
.top { height: 81px; background: #1d4ed8; color: #fff; display: flex; align-items: center; padding: 0 36px 0 32px; flex: none; z-index: 1; box-shadow: 0 1px 3px rgba(0,0,0,.08); }
.date { margin-left: 31px; font-size: 15px; color: #c8dafb; flex: 1; padding-bottom: 2px; }
.blank { background: #fff; height: 41px; border-radius: 6px; margin-right: 9px; }
.w1 { width: 94px; } .w2 { width: 95px; } .w3 { width: 137px; } .w4 { width: 195px; }
.bell { margin-left: 13px; } .sun { margin: 0 41px 0 36px; }
.adm { font-weight: 600; width: 65px; font-size: 15px; padding-bottom: 2px; }
.main { height: 796px; display: flex; overflow: hidden; }

/* label controls */
.left { width: 360px; margin-left: 27px; padding-top: 27px; display: flex; flex-direction: column; gap: 18px; flex: none; }
.panel { border: 1px solid; border-radius: 9px; padding: 0 27px; flex: none; box-shadow: 0 1px 2px rgba(0,0,0,.05); }
.blue { height: 693px; border-color: #bfdbfe; background: linear-gradient(135deg, #eff6ff, #eef2ff); }
.green { height: 200px; border-color: #bbf7d0; background: linear-gradient(135deg, #f0fdf4, #ecfdf5); }
.panel h2 { display: flex; align-items: center; gap: 9px; height: 27px; margin-top: 27px; font-size: 25.4px; letter-spacing: -.35px; color: #1d4ed8; white-space: nowrap; }
.green h2 { color: #15803d; letter-spacing: -.45px; }
.panel label { display: block; -webkit-text-stroke: .3px currentColor; font-size: 15px; line-height: 22px; color: #374151; margin: 21px 0 11px; }
.panel h2 + label { margin-top: 17px; margin-bottom: 11px; }
.select { height: 45px; border: 1px solid #e2e8f0; border-radius: 7px; background: #fff; display: flex; align-items: center; justify-content: space-between; padding: 0 13.5px; white-space: nowrap; font-size: 14.9px; }
.select span { padding-bottom: 2px; }
.select svg { width: 18px; height: 18px; opacity: .5; }
.pair { display: grid; grid-template-columns: 1fr 1fr; gap: 9px; }
.obtn { height: 72px; border: 1px solid #e2e8f0; border-radius: 7px; background: #fff; display: flex; flex-direction: column; align-items: center; justify-content: center; gap: 6px; font-weight: 600; font-size: 12.4px; line-height: 18px; }
.obtn i { border: 2px solid #0f172a; border-radius: 4px; }
.land { width: 27px; height: 18px; } .port { width: 18px; height: 27px; }
.obtn.sel { background: #007fff; border-color: #007fff; color: #f8fafc; gap: 5px; }
.obtn.sel i { border-color: #fff; }
.stats { gap: 14px; margin-top: 18px; }
.stat { height: 83px; border: 1px solid #e5e7eb; border-radius: 9px; background: #fff; padding: 14px 13.5px 0; display: flex; flex-direction: column; }
.stat b { font-size: 25.5px; line-height: 36px; color: #2563eb; }
.stat.g b { color: #16a34a; }
.stat span { font-size: 12.6px; line-height: 20px; color: #6b7280; }
.panel .cp { margin: 21px 0 11px; }
.panel .lr { margin: 16px 0 11px; }
.copies { display: flex; align-items: center; gap: 9px; }
.btn { height: 41px; border: 1px solid #e2e8f0; border-radius: 7px; background: #fff; display: flex; align-items: center; justify-content: center; font-weight: 600; white-space: nowrap; flex: none; font-size: 14.5px; }
.mi { width: 35px; opacity: .5; } .pl { width: 40px; } .num { width: 72px; height: 45px; font-weight: 400; padding-right: 16px; }
.qa { font-size: 12.7px; }

/* filters */
.content { width: 1168px; margin-left: 27px; display: flex; flex-direction: column; gap: 27px; flex: none; }
.card { border: 1px solid #e2e8f0; border-radius: 9px; background: #fff; padding: 0 27px; box-shadow: 0 1px 2px rgba(0,0,0,.06); flex: none; }
.filters { height: 172px; border-top: 0; border-radius: 0 0 9px 9px; }
.frow { display: flex; height: 81px; padding-top: 10px; }
.field { width: 358.5px; margin-right: 18px; }
.field label { display: block; font-weight: 600; font-size: 14.6px; line-height: 20px; margin-bottom: 6px; }
.ph { color: #64748b; font-size: 14.7px; }
.ph span { padding-bottom: 0; }
.tog { display: flex; align-items: center; gap: 9px; height: 27px; margin-top: 33px; font-weight: 600; width: 214px; white-space: nowrap; font-size: 14.6px; letter-spacing: .12px; }
.switch { width: 50px; height: 27px; border-radius: 14px; background: #e2e8f0; padding: 2px; flex: none; }
.switch i { display: block; width: 23px; height: 23px; border-radius: 50%; background: #fff; box-shadow: 0 10px 15px -3px rgba(0,0,0,.15), 0 4px 6px -4px rgba(0,0,0,.15); }
.list { width: 47px; margin-top: 26px; }
.srow { display: flex; align-items: center; height: 45px; margin-top: 18px; }
.name { width: 144px; margin-right: 9px; }
.arr { width: 36px; margin-right: 18px; font-family: "Liberation Sans", sans-serif; font-weight: 400; font-size: 15px; }
.vsep { width: 2px; height: 36px; background: #e2e8f0; margin-right: 18px; }
.sa { width: 127px; margin-right: 9px; letter-spacing: .3px; } .da { width: 112px; margin-right: 9px; letter-spacing: .15px; } .inv { width: 71px; }
.badge { margin-left: auto; width: 179px; height: 25px; border-radius: 13px; background: #4fc074; font-size: 13px; -webkit-text-stroke: .3px currentColor; display: flex; align-items: center; justify-content: center; white-space: nowrap; padding-top: 2px; }

/* product list */
.prods { height: 900px; }
.prods h2 { font-size: 25.4px; letter-spacing: -.3px; line-height: 30px; margin: 26px 0 25px; }
.grid { display: grid; grid-template-columns: repeat(4, 264.5px); gap: 18px; grid-auto-rows: 152.7px; }
.p { border: 1px solid #e2e8f0; border-radius: 9px; padding: 18px; position: relative; }
.hov { box-shadow: 0 4px 6px -1px rgba(0,0,0,.1), 0 2px 4px -2px rgba(0,0,0,.1); }
.h { display: flex; justify-content: space-between; align-items: flex-start; font-weight: 600; font-size: 14.9px; line-height: 22.8px; white-space: nowrap; letter-spacing: .2px; margin-bottom: 1px; }
.n { display: flex; align-items: center; gap: 9px; min-width: 0; flex: 1; }
.n i { width: 18px; height: 18px; border: 1px solid #007fff; border-radius: 4px; flex: none; }
.h b { font-weight: 600; font-size: 14.7px; letter-spacing: 0; }
.s { display: flex; justify-content: space-between; font-size: 12.7px; line-height: 18px; color: #64748b; }
.p .m { position: absolute; right: 18px; top: 42px; font-size: 12.7px; line-height: 18px; color: #64748b; }
.f { display: flex; justify-content: space-between; margin-top: 7.7px; }
.f em, .f u { font-style: normal; text-decoration: none; font-size: 12.8px; font-weight: 600; height: 24.7px; line-height: 24px; border: 1px solid #e2e8f0; border-radius: 13px; padding: 0 10.5px; }
.f em { background: #007fff; border-color: #007fff; color: #f8fafc; letter-spacing: .1px; }
.f em.red { background: #ef4444; border-color: #ef4444; }
.main-bar { width: 24px; margin-left: auto; padding: 7px 0 5px; }
.main-bar b { height: 120px; margin-top: 74px; }
.handle { position: absolute; left: 1881px; top: 516px; z-index: 3; }

/* taskbar */
.task { height: 72px; border-top: 2px solid #48484a; display: flex; color: #fff; position: relative; flex: none; background: linear-gradient(90deg, #202322 0, #202322 190px, #351c24 260px, #351c24 430px, #2a1d30 500px, #232228 600px, #212225 1060px, #441416 1170px, #441416 1210px, #262022 1300px, #222423 1420px, #262224 1650px, #38192a 1920px); }
.weather { width: 521px; padding: 21px 0 0 30px; position: relative; }
.weather span { position: absolute; left: 46px; top: 8px; width: 25px; height: 25px; border-radius: 50%; background: #ff9aa4; color: #2a1516; display: grid; place-items: center; font-size: 16px; }
.apps { display: flex; gap: 6.15px; margin-left: 2px; padding-top: 4px; }
.a { width: 42px; height: 60px; border-radius: 7px; display: grid; place-items: center; position: relative; flex: none; }
.a svg { width: 24px; height: 24px; }
.a .dot { position: absolute; right: 5px; top: 12px; width: 6px; height: 6px; border-radius: 50%; background: #f4826a; }
.a .run { position: absolute; left: 18px; bottom: 1px; width: 6px; height: 5px; border-radius: 3px; background: #9c9c9c; }
.a .line { position: absolute; left: 13px; bottom: 1px; width: 16px; height: 5px; border-radius: 3px; background: #f4826a; }
.a .line.w { left: 6px; width: 30px; background: #ff9aa4; }
.a em { position: absolute; left: 20px; top: 18px; width: 13px; height: 13px; border-radius: 50%; background: #7b1fa2; font: 9px "Open Sans", sans-serif; display: grid; place-items: center; }
.a.act { background: #38383a; border: 1px solid #444446; }
.a.pink { background: #8a4549; border-color: #955054; }
.ai { width: 20px; height: 20px; background: #330000; color: #ff9a00; font-weight: 700; font-size: 12px; display: grid; place-items: center; border-radius: 3px; }
.tray { margin-left: auto; display: flex; align-items: center; padding: 0 29px 4px 0; }
.tray .ln { stroke-width: 1.8; }
.cl { margin-left: 25px; } .sy { margin-left: 23px; } .tp { margin-left: 22px; } .wf { margin-left: 24px; } .vo { margin-left: 10px; } .ba { margin-left: 10px; }
.clock { width: 117px; display: flex; flex-direction: column; align-items: flex-end; font-size: 17.8px; line-height: 24px; padding-top: 2px; }
```
